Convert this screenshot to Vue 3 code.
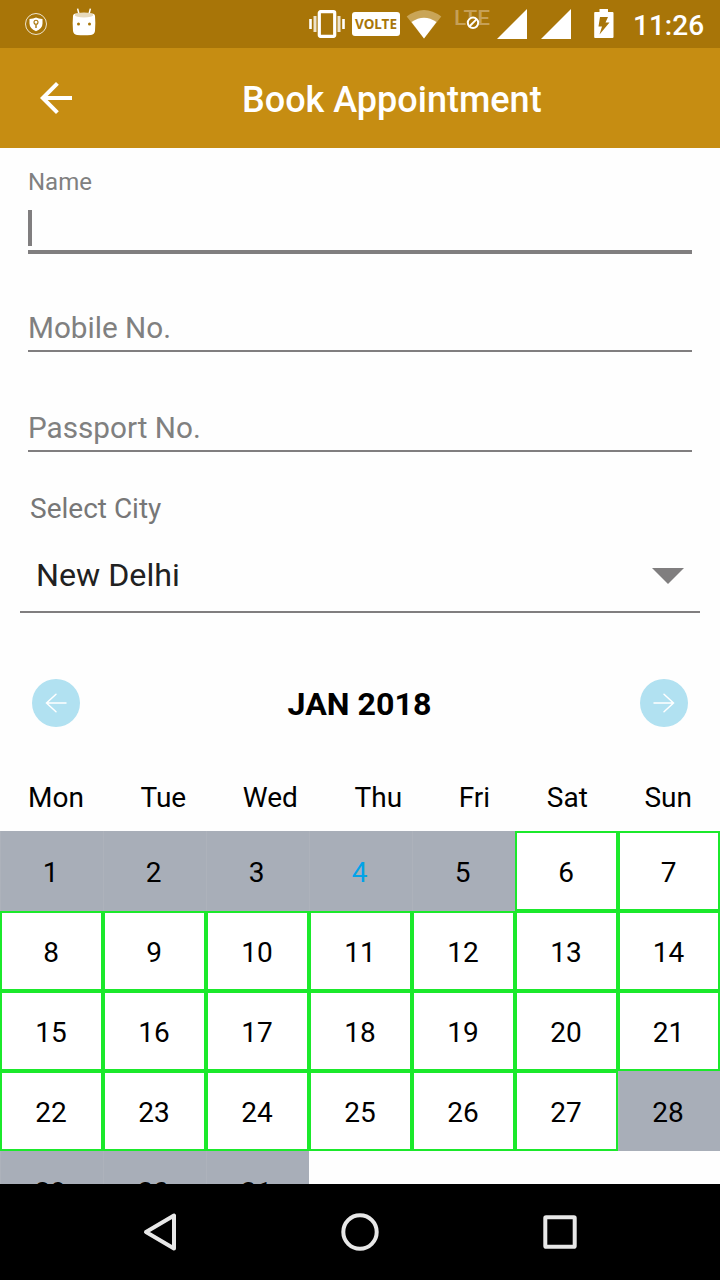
<script setup>
import { ref } from 'vue'

const mobile = ref('')
const passport = ref('')
const city = ref('New Delhi')
const weekdays = ['Mon', 'Tue', 'Wed', 'Thu', 'Fri', 'Sat', 'Sun']
const today = 4

// only the 6th to the 27th can be booked
const days = Array.from({ length: 31 }, (_, i) => ({
  day: i + 1,
  open: i + 1 >= 6 && i + 1 <= 27
}))
</script>

<template>
  <div class="phone">
    <div class="status">
      <svg class="shield" width="24" height="24" viewBox="0 0 24 24">
        <circle cx="12" cy="12" r="10.5" fill="none" stroke="#fff" stroke-opacity=".8" />
        <path d="M5.5 7Q9.5 7 12 5.6Q14.5 7 18.500 7V11.5Q18.500 16.500 12 19.200Q5.5 16.500 5.5 11.5Z" fill="#fff" />
        <circle cx="12" cy="10.3" r="2" fill="none" stroke="#a87508" stroke-width="1.1" />
        <path d="M12 12.5V16" stroke="#a87508" stroke-width="1.4" />
      </svg>
      <svg class="cat" width="24" height="28" viewBox="0 0 24 28">
        <path d="M5.6 .6L7 6M18.4 .6L17 6" stroke="#fff" stroke-width="1.5" />
        <path d="M1 8Q1.2 5.5 4 5.5H20Q22.8 5.5 23 8Q23.7 15 23 23Q22.5 26.5 19 26.9Q12 27.8 5 26.9Q1.5 26.5 1 23Q.3 15 1 8Z" fill="#fff" />
        <ellipse cx="12" cy="7" rx="9.3" ry="2.6" fill="#e7dabd" />
        <circle cx="6.5" cy="16" r="1.5" fill="#a87508" />
        <circle cx="17.5" cy="16" r="1.5" fill="#a87508" />
      </svg>
      <svg class="vibrate" width="36" height="30" viewBox="0 0 36 30">
        <rect x="10.3" y="2.7" width="15.4" height="24.6" rx="1.2" fill="none" stroke="#fff" stroke-width="3.2" />
        <path d="M1.5 10V20M34.5 10V20" stroke="#fff" stroke-width="2.6" />
        <path d="M6 7V23M30 7V23" stroke="#fff" stroke-opacity=".8" stroke-width="3" />
      </svg>
      <span class="volte">VOLTE</span>
      <svg class="wifi" width="36" height="30" viewBox="0 0 36 30">
        <path d="M.7 7.5Q18-5.5 35.3 7.5L18 29.5Z" fill="#c9a557" />
        <path d="M5.5 13Q18 4.500 30.5 13L18 29.5Z" fill="#fff" />
      </svg>
      <svg class="lte" width="36" height="24" viewBox="0 0 36 24">
        <text x="-1" y="18" textLength="36" lengthAdjust="spacingAndGlyphs">LTE</text>
        <circle cx="18" cy="15.8" r="6.3" fill="#a87508" />
        <circle cx="18" cy="15.8" r="5.2" fill="none" stroke="#fff" stroke-width="2" />
        <path d="M14.6 19.2L21.4 12.4" stroke="#fff" stroke-width="2" />
      </svg>
      <svg class="signal" width="30" height="30" viewBox="0 0 30 30"><path d="M30 0V30H0Z" /></svg>
      <svg class="signal second" width="30" height="30" viewBox="0 0 30 30"><path d="M30 0V30H0Z" /></svg>
      <svg class="battery" width="20" height="30" viewBox="0 0 20 30">
        <path d="M1 4H5.5V1H14V4H18.5Q19.5 4 19.5 5V29Q19.5 30 18.5 30H1Q.2 30 .2 29V5Q.2 4 1 4Z" fill="#fff" />
        <path d="M6 9H14L11.5 14.5H15.5L5.5 26.500L8 18.500H4.500Z" fill="#a87508" />
      </svg>
      <span class="clock">11:26</span>
    </div>

    <header class="bar">
      <svg width="48" height="48" viewBox="0 0 24 24">
        <path d="M20 11H7.83l5.59-5.59L12 4l-8 8 8 8 1.41-1.41L7.83 13H20v-2z" fill="#fff" />
      </svg>
      <h1>Book Appointment</h1>
    </header>

    <main class="content">
      <div class="field active">
        <label>Name</label>
        <div class="caret"></div>
      </div>
      <div class="field">
        <input v-model="mobile" type="text" placeholder="Mobile No." />
      </div>
      <div class="field">
        <input v-model="passport" type="text" placeholder="Passport No." />
      </div>

      <p class="city-label">Select City</p>
      <div class="city">
        <span>{{ city }}</span>
        <svg width="32" height="16" viewBox="0 0 32 16"><path d="M0 0H32L16 16Z" fill="#807e7f" /></svg>
      </div>

      <div class="month">
        <svg width="48" height="48" viewBox="0 0 48 48">
          <circle cx="24" cy="24" r="24" fill="#b1e1f1" />
          <path d="M34 24H14.5M24 15.2L14.5 24L24 32.8" />
        </svg>
        <h2>JAN 2018</h2>
        <svg width="48" height="48" viewBox="0 0 48 48">
          <circle cx="24" cy="24" r="24" fill="#b1e1f1" />
          <path d="M14 24H33.5M24 15.2L33.5 24L24 32.8" />
        </svg>
      </div>

      <div class="weekdays">
        <span v-for="w in weekdays" :key="w">{{ w }}</span>
      </div>
      <div class="days">
        <div
          v-for="d in days"
          :key="d.day"
          class="day"
          :class="{ open: d.open, today: d.day === today }"
        >{{ d.day }}</div>
      </div>
    </main>

    <nav class="nav">
      <svg width="40" height="40" viewBox="0 0 40 40"><path d="M34 3.5V36.5L6 20Z" /></svg>
      <svg width="40" height="40" viewBox="0 0 40 40"><circle cx="20" cy="20" r="16.7" /></svg>
      <svg width="40" height="40" viewBox="0 0 40 40"><rect x="5.3" y="5.3" width="29.4" height="29.4" rx=".8" /></svg>
    </nav>
  </div>
</template>

<style>
body {
  margin: 0;
}
</style>

<style scoped>
.phone {
  width: 720px;
  height: 1280px;
  display: flex;
  flex-direction: column;
  overflow: hidden;
  background: #fefefe;
  font-family: Roboto, sans-serif;
  color: #000;
}
svg {
  display: block;
  flex: none;
}

.status {
  height: 48px;
  flex: none;
  display: flex;
  align-items: flex-start;
  background: #a87508;
  color: #fff;
}
.shield {
  margin: 12px 0 0 24px;
}
.cat {
  margin: 8px 0 0 24px;
}
.vibrate {
  margin: 9px 0 0 213px;
}
.volte {
  width: 48px;
  height: 24px;
  margin: 12px 0 0 7px;
  border-radius: 3px;
  background: #fff;
  color: #a87508;
  font-family: "Noto Sans", sans-serif;
  font-size: 13.5px;
  font-weight: 700;
  line-height: 24px;
  text-align: center;
}
.wifi {
  margin: 9px 0 0 6px;
}
.lte {
  margin: 7px 0 0 13px;
}
.lte text {
  font-size: 21px;
  font-weight: 500;
  fill: #c6a057;
}
.signal {
  margin: 9px 0 0 6px;
  fill: #fff;
}
.signal.second {
  margin-left: 14px;
}
.battery {
  margin: 8px 0 0 23px;
}
.clock {
  margin-left: 19px;
  font-size: 28px;
  font-weight: 500;
  line-height: 51px;
}

.bar {
  height: 100px;
  flex: none;
  display: flex;
  align-items: center;
  padding-left: 32px;
  background: #c68d12;
  color: #fff;
}
h1 {
  margin: 0 0 0 162px;
  padding-top: 3px;
  font-size: 36px;
  font-weight: 500;
  line-height: 48px;
}

.content {
  flex: 1;
  min-height: 0;
  overflow: hidden;
}
.field {
  height: 98px;
  margin: 0 28px;
  display: flex;
  flex-direction: column;
  justify-content: flex-end;
  border-bottom: 2px solid #807e7f;
}
.field.active {
  height: 102px;
  border-bottom-width: 4px;
}
.field.active + .field {
  height: 96px;
}
label {
  font-size: 24px;
  line-height: 28px;
  color: #808080;
}
.caret {
  width: 4px;
  height: 36px;
  margin: 14px 0 4px;
  background: #807e7f;
}
input {
  height: 40px;
  margin-bottom: 3px;
  padding: 0;
  border: 0;
  outline: 0;
  background: transparent;
  font-family: Roboto, sans-serif;
  font-size: 29.7px;
}
input::placeholder {
  color: #808080;
  opacity: 1;
}
.city-label {
  margin: 37px 0 0 30px;
  font-size: 28px;
  line-height: 40px;
  color: #777;
}
.city {
  height: 72px;
  margin: 10px 20px 0;
  padding: 0 16px;
  display: flex;
  align-items: center;
  justify-content: space-between;
  border-bottom: 2px solid #807e7f;
  font-size: 32.2px;
  color: #212121;
}
.city svg {
  margin-top: 2px;
}

.month {
  display: flex;
  align-items: center;
  justify-content: space-between;
  padding: 66px 32px 0;
}
.month path {
  fill: none;
  stroke: #fff;
  stroke-width: 1.5;
  stroke-linecap: round;
}
h2 {
  margin: 0;
  padding: 2px 1px 0 0;
  font-size: 32.2px;
  font-weight: 700;
  line-height: 40px;
}
.weekdays {
  display: flex;
  justify-content: space-between;
  padding: 50px 28px 13px;
  font-size: 28px;
  line-height: 41px;
}
.days {
  display: grid;
  grid-template-columns: repeat(6, 103px) 102px;
  grid-auto-rows: 80px;
}
.day {
  box-sizing: border-box;
  padding: 2px 3px 0 0;
  border-left: 1px solid #adb2bb;
  background: #a8aeb8;
  font-size: 28px;
  line-height: 80px;
  text-align: center;
}
.day.open {
  padding: 0 1px 0 0;
  border: 2px solid #1be92b;
  background: #fff;
}
.day.today {
  color: #03a3e8;
}

.nav {
  height: 96px;
  flex: none;
  display: flex;
  align-items: center;
  justify-content: center;
  gap: 160px;
  background: #000;
}
.nav svg {
  fill: none;
  stroke: #e8e8e8;
  stroke-width: 4;
  stroke-linejoin: round;
}
</style>
